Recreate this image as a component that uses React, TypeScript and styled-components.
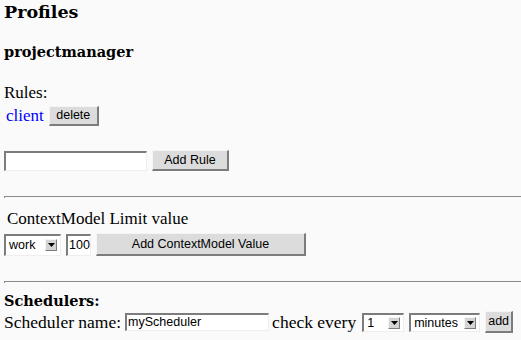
import React from "react";
import styled, { createGlobalStyle } from "styled-components";

const GlobalStyle = createGlobalStyle`
  html, body {
    margin: 0;
    padding: 0;
    background: #fafafa;
  }
  body {
    font-family: "Liberation Serif", "Times New Roman", serif;
    font-size: 17px;
    color: #000;
  }
`;

const Page = styled.div`
  padding: 2px 0 0 4px;
`;

const Title = styled.h2`
  margin: 0;
  font-family: "DejaVu Serif", serif;
  font-size: 17.5px;
  line-height: 20px;
  font-weight: bold;
`;

const SubTitle = styled.h3<{ $top: number }>`
  margin: ${({ $top }) => $top}px 0 0;
  font-family: "DejaVu Serif", serif;
  font-size: 14.5px;
  line-height: 18px;
  font-weight: bold;
`;

const Label = styled.div<{ $top: number; $indent?: number }>`
  margin: ${({ $top }) => $top}px 0 0 ${({ $indent }) => $indent ?? 0}px;
  line-height: 20px;
`;

const Row = styled.div<{ $top: number; $height: number }>`
  display: flex;
  align-items: center;
  height: ${({ $height }) => $height}px;
  margin-top: ${({ $top }) => $top}px;
`;

const Link = styled.a`
  color: #0000ff;
  text-decoration: none;
  line-height: 20px;
  margin: 0 5px 0 2px;
`;

const Text = styled.span<{ $gap?: number }>`
  font-size: 17.5px;
  line-height: 20px;
  white-space: nowrap;
  margin-right: ${({ $gap }) => $gap ?? 4}px;
`;

const Button = styled.button<{ $w: number; $h: number; $gap?: number }>`
  box-sizing: border-box;
  width: ${({ $w }) => $w}px;
  height: ${({ $h }) => $h}px;
  margin: 0 ${({ $gap }) => $gap ?? 0}px 0 0;
  padding: 0;
  background: #dcdcdc;
  border-style: solid;
  border-width: 1px 2px 2px 1px;
  border-color: #f4f4f4 #7c7c7c #7c7c7c #f4f4f4;
  font-family: "Liberation Sans", Arial, sans-serif;
  font-size: 12.5px;
  color: #000;
  line-height: 1;
`;

const TextInput = styled.div<{ $w: number; $h: number; $gap?: number }>`
  box-sizing: border-box;
  width: ${({ $w }) => $w}px;
  height: ${({ $h }) => $h}px;
  margin-right: ${({ $gap }) => $gap ?? 0}px;
  background: #fff;
  border-style: solid;
  border-width: 2px 1px 1px 2px;
  border-color: #7c7c7c #eeeeee #eeeeee #7c7c7c;
  font-family: "Liberation Sans", Arial, sans-serif;
  font-size: 12.5px;
  line-height: ${({ $h }) => $h - 3}px;
  padding-left: 1px;
  overflow: hidden;
  white-space: nowrap;
`;

const SelectBox = styled.div<{ $w: number; $h: number; $gap?: number }>`
  box-sizing: border-box;
  display: flex;
  align-items: center;
  justify-content: space-between;
  width: ${({ $w }) => $w}px;
  height: ${({ $h }) => $h}px;
  margin-right: ${({ $gap }) => $gap ?? 0}px;
  padding: 0 3px 0 3px;
  background: #fff;
  border-style: solid;
  border-width: 2px 1px 1px 2px;
  border-color: #7c7c7c #eeeeee #eeeeee #7c7c7c;
  font-family: "Liberation Sans", Arial, sans-serif;
  font-size: 12.5px;
`;

const ArrowButton = styled.span`
  box-sizing: border-box;
  display: flex;
  align-items: center;
  justify-content: center;
  width: 12px;
  height: 12px;
  background: #d4d4d4;
  border-style: solid;
  border-width: 1px;
  border-color: #f4f4f4 #7c7c7c #7c7c7c #f4f4f4;
`;

const Divider = styled.div<{ $top: number }>`
  box-sizing: border-box;
  height: 2px;
  margin-top: ${({ $top }) => $top}px;
  border-top: 1px solid #8a8a8a;
  border-left: 1px solid #8a8a8a;
`;

const Select = ({ value, w, h, gap }: { value: string; w: number; h: number; gap?: number }) => (
  <SelectBox $w={w} $h={h} $gap={gap}>
    <span>{value}</span>
    <ArrowButton>
      <svg width="7" height="4" viewBox="0 0 7 4">
        <path d="M0 0 H7 L3.5 4 Z" fill="#000" />
      </svg>
    </ArrowButton>
  </SelectBox>
);

export default function App() {
  return (
    <Page>
      <GlobalStyle />
      <Title>Profiles</Title>
      <SubTitle $top={21}>projectmanager</SubTitle>
      <Label $top={22}>Rules:</Label>
      <Row $top={3} $height={20}>
        <Link href="#">client</Link>
        <Button $w={50} $h={20}>delete</Button>
      </Row>
      <Row $top={24} $height={21}>
        <TextInput $w={143} $h={20} $gap={5} />
        <Button $w={77} $h={21}>Add Rule</Button>
      </Row>
      <Divider $top={25} />
      <Label $top={11} $indent={3}>ContextModel Limit value</Label>
      <Row $top={4} $height={23}>
        <Select value="work" w={57} h={22} gap={5} />
        <TextInput $w={25} $h={22} $gap={5}>100</TextInput>
        <Button $w={210} $h={23}>Add ContextModel Value</Button>
      </Row>
      <Divider $top={25} />
      <SubTitle $top={9}>Schedulers:</SubTitle>
      <Row $top={1} $height={22}>
        <Text $gap={4}>Scheduler name:</Text>
        <TextInput $w={144} $h={18} $gap={3}>myScheduler</TextInput>
        <Text $gap={6}>check every</Text>
        <Select value="1" w={42} h={19} gap={5} />
        <Select value="minutes" w={71} h={19} gap={5} />
        <Button $w={28} $h={22}>add</Button>
      </Row>
    </Page>
  );
}
